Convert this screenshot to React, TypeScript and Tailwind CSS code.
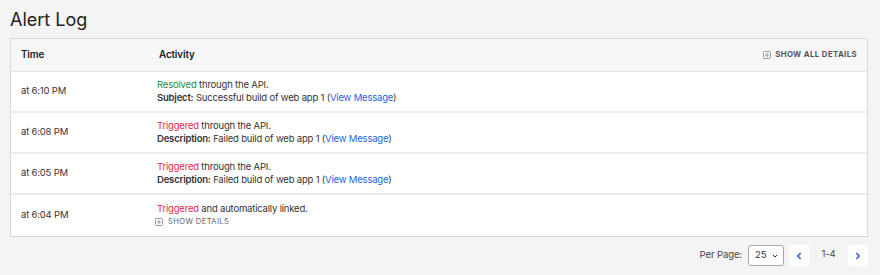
import { ChevronDown, ChevronLeft, ChevronRight } from 'lucide-react';

const rows = [
  { time: 'at 6:10 PM', status: 'Resolved', rest: ' through the API.', label: 'Subject:', text: 'Successful build of web app 1' },
  { time: 'at 6:08 PM', status: 'Triggered', rest: ' through the API.', label: 'Description:', text: 'Failed build of web app 1' },
  { time: 'at 6:05 PM', status: 'Triggered', rest: ' through the API.', label: 'Description:', text: 'Failed build of web app 1' },
  { time: 'at 6:04 PM', status: 'Triggered', rest: ' and automatically linked.', label: null, text: '' },
];

const PlusBox = () => (
  <svg width="8" height="8" viewBox="0 0 8 8" className="shrink-0">
    <rect x="0.5" y="0.5" width="7" height="7" rx="1" fill="none" stroke="#999" />
    <path d="M4 2v4M2 4h4" stroke="#999" />
  </svg>
);

export default function App() {
  return (
    <div className="w-[880px] h-[275px] bg-[#f4f4f4] text-[#333] font-['Inter',sans-serif] px-[10px] pt-[9px]">
      <h1 className="text-[18px] leading-[22px] text-[#222] mb-[7px]">Alert Log</h1>
      <div className="w-[858px] border border-[#d8d8d8] bg-white">
        <div className="flex items-center h-[33px] bg-[#f7f7f7] border-b border-[#e3e3e3] text-[9.8px] tracking-[-0.01em] font-semibold text-[#222]">
          <div className="w-[148px] pl-[10px]">Time</div>
          <div className="flex-1">Activity</div>
          <div className="flex items-center gap-[4px] pr-[10px] text-[7.8px] tracking-[0.05em] text-[#555] font-bold">
            <PlusBox />
            SHOW ALL DETAILS
          </div>
        </div>
        {rows.map((r, i) => (
          <div
            key={i}
            className={`flex items-center h-[41px] text-[9.5px] tracking-[-0.02em] ${i < rows.length - 1 ? 'border-b-2 border-[#ececec]' : ''}`}
          >
            <div className="w-[146px] pl-[10px]">{r.time}</div>
            <div className="flex-1 leading-[12.5px]">
              <div>
                <span className={r.status === 'Resolved' ? 'text-[#2e8540]' : 'text-[#e4293e]'}>{r.status}</span>
                {r.rest}
              </div>
              {r.label ? (
                <div>
                  <span className="font-semibold">{r.label}</span> {r.text} {'('}
                  <span className="text-[#1f5fe0]">View Message</span>
                  {')'}
                </div>
              ) : (
                <div className="flex items-center gap-[5px] -ml-[2px] text-[7.6px] tracking-[0.05em] text-[#666]">
                  <PlusBox />
                  SHOW DETAILS
                </div>
              )}
            </div>
          </div>
        ))}
      </div>
      <div className="flex items-center justify-end w-[858px] mt-[8px] text-[9.5px] tracking-[-0.01em]">
        <span className="mr-[6px] text-[#444]">Per Page:</span>
        <div className="flex items-center justify-between w-[36px] h-[21px] pl-[6px] pr-[4px] bg-white border border-[#aaa] rounded-[3px] text-[#333]">
          <span>25</span>
          <ChevronDown size={8} strokeWidth={3} />
        </div>
        <div className="ml-[5px] flex items-center justify-center w-[20px] h-[21px] bg-white rounded-[3px] text-[#1f5fe0]">
          <ChevronLeft size={10} strokeWidth={3.5} />
        </div>
        <span className="w-[39px] text-center text-[#444] -mt-[3px]">1-4</span>
        <div className="flex items-center justify-center w-[20px] h-[21px] bg-white rounded-[3px] text-[#1f5fe0]">
          <ChevronRight size={10} strokeWidth={3.5} />
        </div>
      </div>
    </div>
  );
}
